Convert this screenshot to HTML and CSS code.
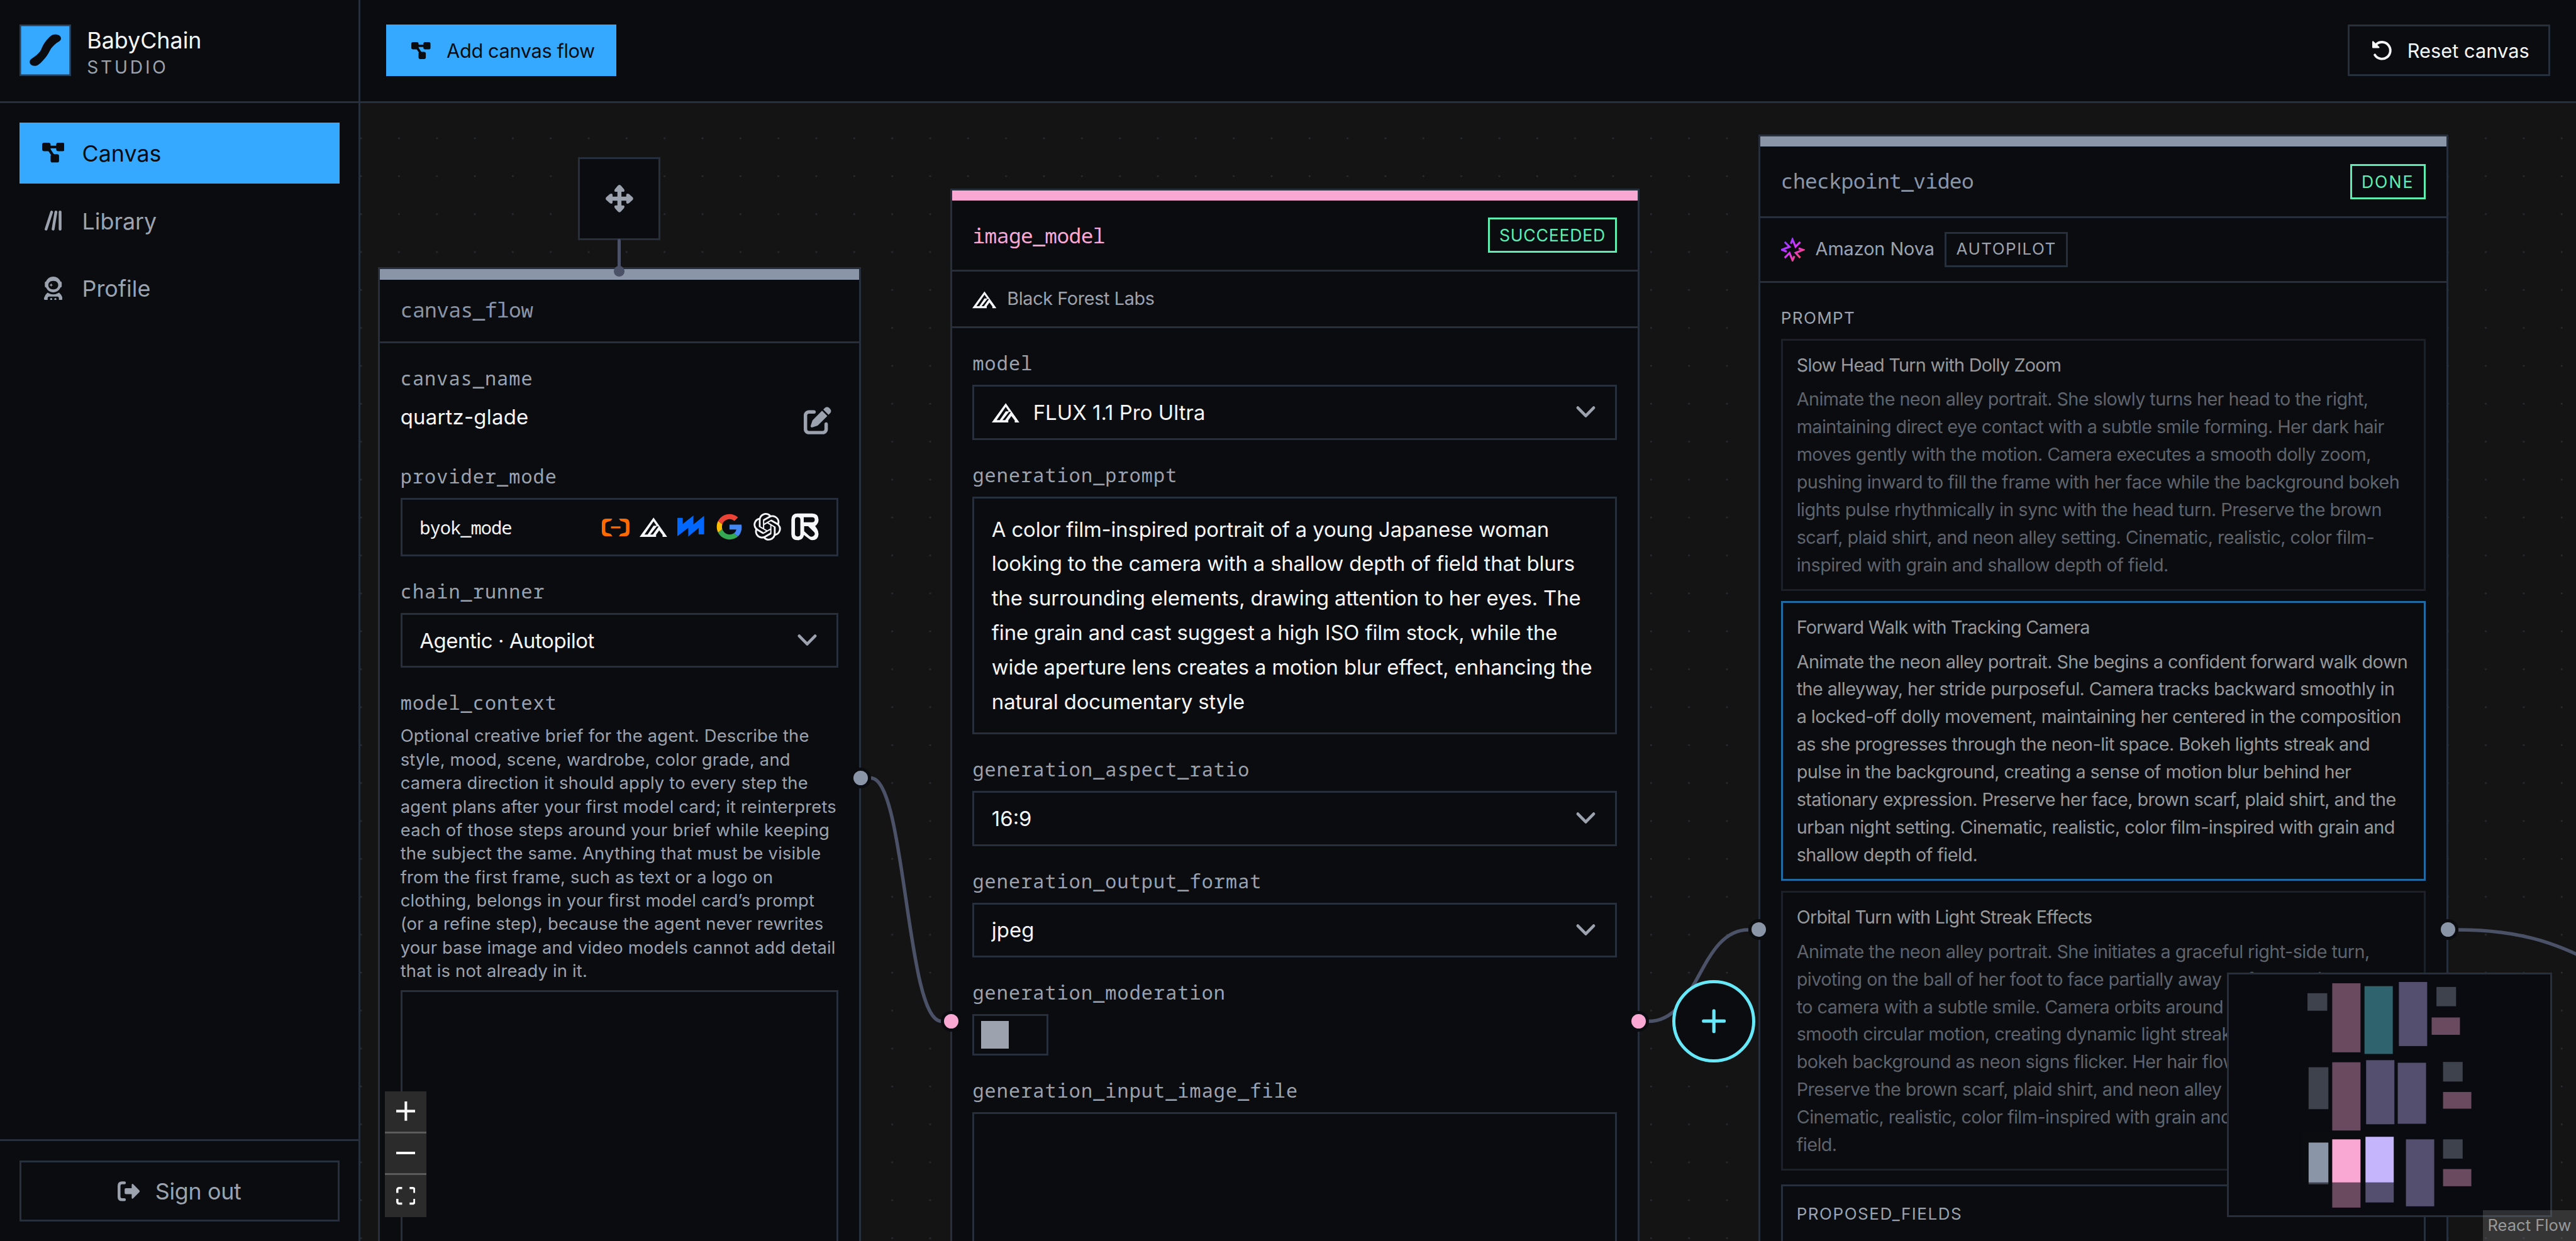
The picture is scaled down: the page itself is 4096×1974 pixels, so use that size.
FILE: index.html
```html
<!DOCTYPE html>
<html lang="en">
<head>
<meta charset="utf-8">
<title>BabyChain Studio</title>
<link rel="stylesheet" href="styles.css">
</head>
<body>
<svg class="defs" aria-hidden="true">
  <defs>
    <linearGradient id="nova" gradientUnits="userSpaceOnUse" x1="4" y1="4" x2="52" y2="52">
      <stop offset="0" stop-color="#7a3cff"/><stop offset=".5" stop-color="#d935ff"/><stop offset="1" stop-color="#ff4d4d"/>
    </linearGradient>
    <symbol id="i-flow" viewBox="0 0 56 49.5">
      <rect x="0" y="0" width="21" height="21" rx="5"/><rect x="35" y="0" width="21" height="21" rx="5"/><rect x="21" y="28.3" width="21" height="21" rx="5"/>
      <path d="M12 10.7H44M14 12L30 36" fill="none" stroke="currentColor" stroke-width="7"/>
    </symbol>
    <symbol id="i-bfl" viewBox="0 0 68 68">
      <path fill-rule="evenodd" d="M34.4 11.3L68 59H56.6V54L48.3 43L40.7 53.5V59H0ZM34.4 20.7L12 53H19.6L34.4 31.5H41.8ZM42.4 33L26.3 53H32.8L47 33.2Z"/>
    </symbol>
    <symbol id="i-chevron" viewBox="0 0 12 12">
      <path d="M1.4 3.5L6 8.2L10.6 3.5" fill="none" stroke="currentColor" stroke-width="1.7" stroke-linecap="round" stroke-linejoin="round"/>
    </symbol>
  </defs>
</svg>
<div class="app">
  <aside class="sidebar">
    <div class="brand">
      <svg class="brand-logo" viewBox="0 0 128 128"><rect x="2" y="2" width="124" height="124" fill="#34a9ff" stroke="#27405c" stroke-width="4"/><path fill="#0a0c10" d="M87.7 24.7C96 24.5 104 28 103 36C102 42 95 43 91 47C84 53 79 58 76 64C72 72 67 80 59 88.5C52 96 46 103 37 102.8C29 102.5 25 98 25.5 92C26 86 31 85 37 80C45 74 51 68 54 62C58 52 62 45 70 36C76 29 81 25 87.7 24.7Z"/></svg>
      <div class="brand-text">
        <div class="brand-name">BabyChain</div>
        <div class="brand-sub">STUDIO</div>
      </div>
    </div>
    <nav class="nav">
      <a class="nav-item nav-item--active"><span class="nav-icon"><svg class="icon-flow"><use href="#i-flow"/></svg></span>Canvas</a>
      <a class="nav-item"><span class="nav-icon"><svg class="icon-library" viewBox="0 0 42 49.5"><path d="M17.3 3.6L3.6 45.9M28 3.6L21 45.9M38.4 3.6V45.9" fill="none" stroke="currentColor" stroke-width="7" stroke-linecap="round"/></svg></span>Library</a>
      <a class="nav-item"><span class="nav-icon"><svg class="icon-astro" viewBox="0 0 46 58"><path fill-rule="evenodd" d="M23 0C31 0 38 4.700 41 12Q44 12 44 15V24Q44 27 41 27C38 34 31 39 23 39S8 34 5 27Q2 27 2 24V15Q2 12 5 12C8 4.700 15 0 23 0ZM23 10.500C15 10.500 10.700 15 10.700 21S15 31.800 23 31.800S35.300 27 35.300 21S31 10.500 23 10.500Z"/><path d="M17.700 16.500L19 19.700L22.200 21L19 22.300L17.700 25.500L16.400 22.300L13.200 21L16.400 19.700Z"/><path d="M8.500 40Q23 48.500 37.500 40Q43.500 45 46 53V55Q46 58 43 58H37V54Q37 49.500 33 49.500H13Q9 49.500 9 54V58H3Q0 58 0 55V53Q2.500 45 8.500 40ZM15.300 58V55.500Q15.300 53 17.800 53T20.300 55.500V58ZM25.700 58V55.500Q25.700 53 28.200 53T30.700 55.500V58Z"/></svg></span>Profile</a>
    </nav>
    <div class="sidebar-foot">
      <button class="signout"><svg class="icon-out" viewBox="0 0 56 49.500"><path d="M17 3.700H11Q3.600 3.700 3.600 11V38.500Q3.600 45.800 11 45.800H17" fill="none" stroke="currentColor" stroke-width="7" stroke-linecap="round"/><path d="M20.500 17H35V8.500Q35.500 4.500 38.500 7L54 22.500Q56 24.700 54 27L38.500 42.500Q35.500 45 35 41V32H20.500Q17.500 32 17.500 29V20Q17.500 17 20.500 17Z"/></svg>Sign out</button>
    </div>
  </aside>
  <main class="main">
    <header class="topbar">
      <button class="btn btn--primary"><svg class="icon-flow-sm"><use href="#i-flow"/></svg>Add canvas flow</button>
      <button class="btn btn--ghost"><svg class="icon-reset" viewBox="0 0 48 48"><path d="M6.400 34.800A20.800 20.800 0 1 0 9.500 9.200" fill="none" stroke="currentColor" stroke-width="6" stroke-linecap="round"/><path d="M0 2Q.5-.8 2.800.8L17.500 15Q19 18 16 18H2Q0 18 0 16Z"/></svg>Reset canvas</button>
    </header>
    <section class="pane">
      <svg class="dots"><defs><pattern id="dots" x="9.700" y="8.300" width="60.330" height="60.330" patternUnits="userSpaceOnUse"><circle cx="51.700" cy="47.600" r="1.400" fill="#2c2d35"/></pattern></defs><rect width="100%" height="100%" fill="url(#dots)"/></svg>

      <div class="flow">
        <svg class="edges" viewBox="0 0 1300 700">
          <path d="M296 391.500C316.400 391.500 316.400 532.700 337 532.700"/>
          <path d="M747 532.700C776.300 532.700 776.300 479.600 805 479.600"/>
          <path d="M1216.600 479.600C1297 479.600 1297 519.300 1378 519.300"/>
        </svg>

        <div class="node mover">
          <svg class="icon-move" viewBox="-34.250 -34.250 68.500 68.500"><path id="mh" d="M0-34.200Q2.500-34.200 4.500-31.500L11.500-23.500Q14.500-17 9-17H5V0H-5V-17H-9Q-14.500-17-11.500-23.500L-4.500-31.500Q-2.500-34.200 0-34.200Z"/><use href="#mh" transform="rotate(90)"/><use href="#mh" transform="rotate(180)"/><use href="#mh" transform="rotate(270)"/></svg>
        </div>

        <article class="node card card--flow">
          <div class="accent accent--slate"></div>
          <header class="card-head card-head--plain"><h2 class="card-title">canvas_flow</h2></header>
          <div class="card-body">
            <div class="field"><div class="label">canvas_name</div>
              <div class="name-row"><span class="name">quartz-glade</span><span class="edit"><svg viewBox="0 0 512 512"><path d="M471.600 21.700c-21.900-21.900-57.300-21.900-79.200 0L362.300 51.700l97.900 97.900 30.100-30.100c21.900-21.900 21.900-57.300 0-79.200L471.600 21.700zm-299.200 220c-6.100 6.100-10.800 13.600-13.500 21.900l-29.600 88.800c-2.900 8.600-.6 18.100 5.800 24.600s15.900 8.700 24.600 5.800l88.800-29.600c8.200-2.700 15.700-7.400 21.900-13.500L437.700 172.300 339.700 74.300 172.400 241.700zM96 64C43 64 0 107 0 160V416c0 53 43 96 96 96H352c53 0 96-43 96-96V320c0-17.700-14.300-32-32-32s-32 14.300-32 32v96c0 17.700-14.300 32-32 32H96c-17.700 0-32-14.300-32-32V160c0-17.700 14.300-32 32-32h96c17.700 0 32-14.300 32-32s-14.300-32-32-32H96z"/></svg></span></div>
            </div>
            <div class="field"><div class="label">provider_mode</div>
              <div class="box provider"><span class="mode">byok_mode</span>
                <span class="providers">
                  <svg class="logo-ali" viewBox="0 0 68 68"><path id="ali" d="M26 14H11Q0 14 0 25V46.500Q0 57.500 11 57.500H26L22 51.500L12 49Q8.500 48 8.500 44V27.500Q8.500 23.500 12 22.500L22 19.500Z"/><use href="#ali" transform="matrix(-1 0 0 1 68 0)"/><path d="M22.500 33H46V38H22.500Z"/></svg>
                  <svg><use href="#i-bfl"/></svg>
                  <svg class="logo-wave" viewBox="0 0 68 68"><path d="M0 12H13.300V27L39.600 6.300V28.300L66 7V52.700H52.500V37L27 58V36.300L0 57.500Z"/></svg>
                  <svg viewBox="-2 -2 52 52"><path fill="#ea4335" d="M24 9.500c3.540 0 6.710 1.220 9.210 3.600l6.850-6.850C35.900 2.380 30.470 0 24 0 14.620 0 6.510 5.380 2.560 13.220l7.980 6.190C12.430 13.720 17.740 9.500 24 9.500z"/><path fill="#4285f4" d="M46.980 24.550c0-1.570-.15-3.090-.38-4.550H24v9.020h12.940c-.58 2.960-2.260 5.480-4.780 7.180l7.730 6c4.510-4.180 7.090-10.360 7.090-17.650z"/><path fill="#fbbc05" d="M10.530 28.590c-.48-1.450-.76-2.990-.76-4.590s.27-3.140.76-4.590l-7.980-6.190C.92 16.460 0 20.120 0 24c0 3.880.92 7.540 2.560 10.780l7.970-6.190z"/><path fill="#34a853" d="M24 48c6.480 0 11.930-2.130 15.890-5.810l-7.730-6c-2.150 1.450-4.920 2.300-8.160 2.300-6.260 0-11.570-4.220-13.470-9.910l-7.980 6.190C6.510 42.620 14.620 48 24 48z"/></svg>
                  <svg viewBox="0 0 24 24"><path d="M22.2819 9.8211a5.9847 5.9847 0 0 0-.5157-4.9108 6.0462 6.0462 0 0 0-6.5098-2.9A6.0651 6.0651 0 0 0 4.9807 4.1818a5.9847 5.9847 0 0 0-3.9977 2.9 6.0462 6.0462 0 0 0 .7427 7.0966 5.98 5.98 0 0 0 .511 4.9107 6.051 6.051 0 0 0 6.5146 2.9001A5.9847 5.9847 0 0 0 13.2599 24a6.0557 6.0557 0 0 0 5.7718-4.2058 5.9894 5.9894 0 0 0 3.9977-2.9001 6.0557 6.0557 0 0 0-.7475-7.0729zm-9.022 12.6081a4.4755 4.4755 0 0 1-2.8764-1.0408l.1419-.0804 4.7783-2.7582a.7948.7948 0 0 0 .3927-.6813v-6.7369l2.02 1.1686a.071.071 0 0 1 .038.052v5.5826a4.504 4.504 0 0 1-4.4945 4.4944zm-9.6607-4.1254a4.4708 4.4708 0 0 1-.5346-3.0137l.142.0852 4.783 2.7582a.7712.7712 0 0 0 .7806 0l5.8428-3.3685v2.3324a.0804.0804 0 0 1-.0332.0615L9.74 19.9502a4.4992 4.4992 0 0 1-6.1408-1.6464zM2.3408 7.8956a4.485 4.485 0 0 1 2.3655-1.9728V11.6a.7664.7664 0 0 0 .3879.6765l5.8144 3.3543-2.0201 1.1685a.0757.0757 0 0 1-.071 0l-4.8303-2.7865A4.504 4.504 0 0 1 2.3408 7.872zm16.5963 3.8558L13.1038 8.364 15.1192 7.2a.0757.0757 0 0 1 .071 0l4.8303 2.7913a4.4944 4.4944 0 0 1-.6765 8.1042v-5.6772a.79.79 0 0 0-.407-.667zm2.0107-3.0231l-.142-.0852-4.7735-2.7818a.7759.7759 0 0 0-.7854 0L9.409 9.2297V6.8974a.0662.0662 0 0 1 .0284-.0615l4.8303-2.7866a4.4992 4.4992 0 0 1 6.6802 4.66zM8.3065 12.863l-2.02-1.1638a.0804.0804 0 0 1-.038-.0567V6.0742a4.4992 4.4992 0 0 1 7.3757-3.4537l-.142.0805L8.704 5.459a.7948.7948 0 0 0-.3927.6813zm1.0976-2.3654l2.602-1.4998 2.6069 1.4998v2.9994l-2.5974 1.4997-2.6067-1.4997Z"/></svg>
                  <svg viewBox="0 0 68 69"><path fill-rule="evenodd" d="M15.500 1H52Q68 1 68 17Q68 27 59.500 32.500L64.500 40Q68 46 68 53Q67 68 52 68Q48 68 44.500 65L31.500 55Q29 68 15.500 68Q0 68 0 53V16.500Q0 1 15.500 1ZM15.700 10.300Q9 10.300 9 17V52.500Q9 59 15.700 59T22.500 52.500V17Q22.500 10.300 15.700 10.300ZM31 10.700V23.300H52Q58.500 23 58.500 17T52 10.700ZM32 33V45.700L45 57.500Q50 61.500 55.500 57.500Q61 53 57 48L42 33Z"/></svg>
                </span>
              </div>
            </div>
            <div class="field"><div class="label">chain_runner</div>
              <div class="box select"><span class="t-agentic">Agentic · Autopilot</span><svg class="chev"><use href="#i-chevron"/></svg></div>
            </div>
            <div class="field"><div class="label">model_context</div>
              <p class="hint">Optional creative brief for the agent. Describe the<br>style, mood, scene, wardrobe, color grade, and<br>camera direction it should apply to every step the<br>agent plans after your first model card; it reinterprets<br>each of those steps around your brief while keeping<br>the subject the same. Anything that must be visible<br>from the first frame, such as text or a logo on<br>clothing, belongs in your first model card’s prompt<br>(or a refine step), because the agent never rewrites<br>your base image and video models cannot add detail<br>that is not already in it.</p>
              <div class="box area"></div>
            </div>
          </div>
        </article>
        <div class="node stub"></div>
        <div class="node stub-dot"></div>

        <article class="node card card--image">
          <div class="accent accent--pink"></div>
          <header class="card-head"><h2 class="card-title card-title--pink">image_model</h2><span class="badge badge--green">SUCCEEDED</span></header>
          <div class="vendor"><svg class="vendor-icon"><use href="#i-bfl"/></svg><span class="vendor-name">Black Forest Labs</span></div>
          <div class="card-body">
            <div class="field"><div class="label">model</div>
              <div class="box select"><svg class="model-icon"><use href="#i-bfl"/></svg><span class="t-flux">FLUX 1.1 Pro Ultra</span><svg class="chev"><use href="#i-chevron"/></svg></div></div>
            <div class="field"><div class="label">generation_prompt</div>
              <div class="box prompt">A color film-inspired portrait of a young Japanese woman<br>looking to the camera with a shallow depth of field that blurs<br>the surrounding elements, drawing attention to her eyes. The<br>fine grain and cast suggest a high ISO film stock, while the<br>wide aperture lens creates a motion blur effect, enhancing the<br>natural documentary style</div></div>
            <div class="field"><div class="label">generation_aspect_ratio</div>
              <div class="box select"><span>16:9</span><svg class="chev"><use href="#i-chevron"/></svg></div></div>
            <div class="field"><div class="label">generation_output_format</div>
              <div class="box select"><span>jpeg</span><svg class="chev"><use href="#i-chevron"/></svg></div></div>
            <div class="field"><div class="label">generation_moderation</div>
              <div class="toggle"><span class="knob"></span></div></div>
            <div class="field"><div class="label">generation_input_image_file</div>
              <div class="box area"></div></div>
          </div>
        </article>

        <article class="node card card--video">
          <div class="accent accent--slate"></div>
          <header class="card-head"><h2 class="card-title">checkpoint_video</h2><span class="badge badge--green badge--done">DONE</span></header>
          <div class="vendor"><svg class="vendor-icon" viewBox="0 0 60 57"><path d="M9 9.300L21 21.300L2 28.700L14 33.300M24.300 13.700L28.300 3L36 21L47.700 9.300M43.700 25L55 29L36.300 36.300L47.700 48.700M33 44.300L28.500 55L21 36.700L9 48.700" fill="none" stroke="url(#nova)" stroke-width="5"/></svg><span class="vendor-name vendor-name--nova">Amazon Nova</span><span class="badge badge--auto">AUTOPILOT</span></div>
          <div class="card-body">
            <div class="caps">PROMPT</div>
            <div class="options">
              <div class="option"><h3>Slow Head Turn with Dolly Zoom</h3><p>Animate the neon alley portrait. She slowly turns her head to the right,<br>maintaining direct eye contact with a subtle smile forming. Her dark hair<br>moves gently with the motion. Camera executes a smooth dolly zoom,<br>pushing inward to fill the frame with her face while the background bokeh<br>lights pulse rhythmically in sync with the head turn. Preserve the brown<br>scarf, plaid shirt, and neon alley setting. Cinematic, realistic, color film-<br>inspired with grain and shallow depth of field.</p></div>
              <div class="option option--picked"><h3>Forward Walk with Tracking Camera</h3><p>Animate the neon alley portrait. She begins a confident forward walk down<br>the alleyway, her stride purposeful. Camera tracks backward smoothly in<br>a locked-off dolly movement, maintaining her centered in the composition<br>as she progresses through the neon-lit space. Bokeh lights streak and<br>pulse in the background, creating a sense of motion blur behind her<br>stationary expression. Preserve her face, brown scarf, plaid shirt, and the<br>urban night setting. Cinematic, realistic, color film-inspired with grain and<br>shallow depth of field.</p></div>
              <div class="option"><h3>Orbital Turn with Light Streak Effects</h3><p>Animate the neon alley portrait. She initiates a graceful right-side turn,<br>pivoting on the ball of her foot to face partially away before turning back<br>to camera with a subtle smile. Camera orbits around her in a<br>smooth circular motion, creating dynamic light streaks in the<br>bokeh background as neon signs flicker. Her hair flows softly.<br>Preserve the brown scarf, plaid shirt, and neon alley setting.<br>Cinematic, realistic, color film-inspired with grain and depth of<br>field.</p></div>
            </div>
            <div class="proposed"><div class="caps caps--fields">PROPOSED_FIELDS</div></div>
          </div>
        </article>

        <span class="handle handle--a"></span>
        <span class="handle handle--pink handle--b1"></span>
        <span class="handle handle--pink handle--b2"></span>
        <span class="handle handle--c1"></span>
        <span class="handle handle--c2"></span>
        <button class="node add-node"><svg viewBox="0 0 14 14"><path d="M7 1V13M1 7H13" fill="none" stroke="currentColor" stroke-width="1.900" stroke-linecap="round"/></svg></button>
      </div>

      <div class="controls">
        <button><svg viewBox="0 0 32 32"><path d="M32 18.133H18.133V32h-4.266V18.133H0v-4.266h13.867V0h4.266v13.867H32z"/></svg></button>
        <button><svg viewBox="0 0 32 5"><path d="M0 0h32v4.200H0z"/></svg></button>
        <button><svg viewBox="0 0 32 30"><path d="M3.692 4.630c0-.53.4-.938.939-.938h5.215V0H4.708C2.130 0 0 2.054 0 4.630v5.216h3.692V4.631zM27.354 0h-5.200v3.692h5.170c.53 0 .984.4.984.939v5.215H32V4.631A4.624 4.624 0 0027.354 0zm.954 24.830c0 .532-.4.940-.939.940h-5.215v3.768h5.215c2.577 0 4.631-2.130 4.631-4.707v-5.139h-3.692v5.139zm-23.677.940c-.531 0-.939-.4-.939-.940v-5.138H0v5.139c0 2.577 2.130 4.707 4.708 4.707h5.138V25.770H4.631z"/></svg></button>
      </div>

      <div class="minimap"><svg viewBox="0 0 200 150">
        <g fill="#8a95a8"><rect x="48.900" y="11.700" width="12.300" height="10.900"/><rect x="129.200" y="7.800" width="12.200" height="12"/><rect x="49.600" y="57.800" width="12.300" height="26.100"/><rect x="133.300" y="54.500" width="12.200" height="12.200"/><rect x="49.600" y="104.700" width="12.300" height="26"/><rect x="133.300" y="102.700" width="12.200" height="12"/></g>
        <g fill="#f9a8d4"><rect x="64.300" y="5.500" width="17.600" height="43"/><rect x="126.200" y="26.800" width="17.600" height="10.800"/><rect x="64.300" y="54.700" width="17.600" height="42.500"/><rect x="133.300" y="73.200" width="17.600" height="10.400"/><rect x="64.300" y="102.700" width="17.600" height="42.500"/><rect x="133.300" y="121.200" width="17.600" height="10.700"/></g>
        <rect fill="#67e8f9" x="84.400" y="7.300" width="17.600" height="42.200"/>
        <g fill="#c4b5fd"><rect x="105.800" y="4.700" width="17.600" height="39.900"/><rect x="85.400" y="53.400" width="17.600" height="39.900"/><rect x="105.100" y="55" width="17.600" height="38"/><rect x="85" y="101.100" width="17.600" height="40.900"/><rect x="110.200" y="102.700" width="17.600" height="41.700"/></g>
        <path fill="#0a0c10" fill-opacity=".6" fill-rule="evenodd" d="M0 0H200V150H0ZM46 98V129.500H106V98Z"/>
      </svg></div>
      <div class="attribution">React Flow</div>
    </section>
  </main>
</div>
</body>
</html>
```
FILE: styles.css
```css
/* 1rem is one layout unit; the window is 1600 units wide. */
html { font-size: 2.56px; }
* { box-sizing: border-box; }
body {
  margin: 0;
  background: #0a0c10;
  color: #f5f6f8;
  font-family: Inter, "Liberation Sans", sans-serif;
  font-size: 12rem;
  overflow: hidden;
}
h2, h3, p { margin: 0; font-weight: 400; }
button { font: inherit; color: inherit; background: none; border: 0; padding: 0; margin: 0; }
svg { display: block; fill: currentColor; flex: none; }
.defs { position: absolute; width: 0; height: 0; }

.app { display: flex; width: 100vw; height: 100vh; }

/* Sidebar */
.sidebar { width: 224rem; flex: none; border-right: 3px solid #272f3d; display: flex; flex-direction: column; }
.brand { height: 64rem; flex: none; border-bottom: 3px solid #272f3d; display: flex; align-items: center; gap: 10rem; padding-left: 12rem; }
.brand-logo { width: 32rem; height: 32rem; }
.brand-text { padding-top: 3.8rem; }
.brand-name { font-size: 14rem; line-height: 17rem; }
.brand-sub { font-size: 11rem; line-height: 16rem; letter-spacing: .135em; color: #9ca3af; }
.nav { flex: 1; padding: 12rem; display: flex; flex-direction: column; gap: 4rem; }
.nav-item { height: 38rem; display: flex; align-items: center; gap: 10rem; padding: 1rem 0 0 13rem; font-size: 14rem; color: #9ca3af; }
.nav-item--active { background: #34a9ff; color: #0a0c10; }
.nav-icon { width: 16rem; margin-top: -1rem; display: flex; justify-content: center; }
.icon-flow { width: 14rem; height: 12.4rem; }
.icon-library { width: 10.5rem; height: 12.4rem; }
.icon-astro { width: 11.5rem; height: 14.5rem; }
.sidebar-foot { border-top: 3px solid #272f3d; padding: 12rem; }
.signout { width: 100%; height: 38rem; border: 3px solid #272f3d; display: flex; align-items: center; justify-content: center; gap: 9.4rem; font-size: 14rem; letter-spacing: -.009em; color: #9ca3af; }
.icon-out { width: 14rem; height: 12.4rem; }

/* Top bar */
.main { flex: 1; min-width: 0; display: flex; flex-direction: column; }
.topbar { height: 64rem; flex: none; border-bottom: 3px solid #272f3d; display: flex; align-items: center; justify-content: space-between; padding: 0 16rem; }
.btn { height: 32rem; display: flex; align-items: center; font-size: 12rem; }
.btn--primary { background: #34a9ff; color: #0a0c10; padding: 0 13.5rem 0 15.6rem; gap: 9.8rem; letter-spacing: -.012em; }
.btn--ghost { border: 3px solid #272f3d; padding: 0 11.8rem 0 14.2rem; gap: 9.8rem; letter-spacing: .002em; }
.icon-flow-sm { width: 12rem; height: 10.6rem; }
.icon-reset { width: 12rem; height: 12rem; overflow: visible; }

/* Canvas */
.pane { position: relative; flex: 1; overflow: hidden; background: #141414; }
.dots { position: absolute; inset: 0; width: 100%; height: 100%; }
.flow { position: absolute; left: 0; top: 0; zoom: 1.071; }
.edges { position: absolute; left: 0; top: 0; width: 1300rem; height: 700rem; overflow: visible; fill: none; stroke: #4b5268; stroke-width: 2; }
.node { position: absolute; }
.card { background: #0a0c10; border: 3px solid #272f3d; }
.card--flow { left: 10rem; top: 95.3rem; width: 280rem; }
.card--image { left: 341.8rem; top: 49.5rem; width: 400rem; }
.card--video { left: 810.6rem; top: 18.3rem; width: 400rem; }
.mover { left: 126rem; top: 31.4rem; width: 48rem; height: 48rem; background: #0a0c10; border: 3px solid #272f3d; display: flex; align-items: center; justify-content: center; color: #9ca3af; }
.icon-move { width: 16rem; height: 16rem; }
.stub { left: 149rem; top: 78.8rem; width: 2rem; height: 18rem; background: #4b5268; border-radius: 1rem; }
.stub-dot { left: 147rem; top: 94.6rem; width: 6rem; height: 6rem; border-radius: 50%; background: #4b5268; }

.accent { height: 6rem; }
.accent--slate { background: #8a95a8; }
.accent--pink { background: #f9a8d4; }
.card-head { height: 41.4rem; border-bottom: 3px solid #272f3d; padding: 0 12rem; display: flex; align-items: center; justify-content: space-between; }
.card-head--plain { height: 37rem; }
.card-title { font-family: "Noto Sans Mono", "Roboto Mono", "JetBrains Mono", monospace; font-size: 12rem; letter-spacing: -.018em; padding-bottom: 1rem; color: #8a95a8; }
.card-title--pink { color: #f9a8d4; padding-bottom: 0; }
.badge { border: 3px solid #272f3d; height: 20.4rem; padding: 0 5.6rem; display: flex; align-items: center; font-size: 9.7rem; letter-spacing: .03em; }
.badge--green { border-color: #5eeeb4; color: #5eeeb4; }
.badge--done { letter-spacing: .075em; }
.badge--auto { font-size: 9.5rem; letter-spacing: .055em; color: #9ca3af; }
.vendor { border-bottom: 3px solid #272f3d; padding: 8rem 12rem; display: flex; align-items: center; gap: 6rem; font-size: 10.5rem; line-height: 15.6rem; }
.vendor-icon { width: 14rem; height: 14rem; }
.vendor-name { letter-spacing: -.0125em; color: #9ca3af; }
.vendor-name--nova { letter-spacing: -.001em; }

.card-body { padding: 12rem; display: flex; flex-direction: column; gap: 12rem; }
.field { display: flex; flex-direction: column; gap: 4rem; }
.label { font-family: "Noto Sans Mono", "Roboto Mono", "JetBrains Mono", monospace; font-size: 11rem; line-height: 16.8rem; letter-spacing: .036em; color: #9ca3af; }
.name-row { display: flex; justify-content: space-between; height: 24rem; line-height: 20rem; }
.name { font-size: 12rem; letter-spacing: .007em; }
.edit { width: 24rem; height: 24rem; display: flex; align-items: center; justify-content: center; color: #9ca3af; }
.edit svg { width: 16rem; height: 16rem; }
.box { border: 3px solid #272f3d; }
.provider { height: 34rem; padding: 0 10rem; display: flex; align-items: center; justify-content: space-between; }
.mode { font-family: "Noto Sans Mono", "Roboto Mono", "JetBrains Mono", monospace; font-size: 10.5rem; letter-spacing: -.035em; }
.providers { display: flex; gap: 6rem; }
.providers svg { width: 16rem; height: 16rem; }
.providers .logo-ali { fill: #ff6a00; }
.providers .logo-wave { fill: #0068ff; }
.select { height: 32rem; padding: 0 11rem 0 10rem; display: flex; align-items: center; gap: 8rem; font-size: 12rem; }
.model-icon { width: 16rem; height: 16rem; }
.t-agentic { letter-spacing: -.013em; }
.t-flux { letter-spacing: .001em; }
.chev { width: 12rem; height: 12rem; margin-left: auto; color: #9ca3af; }
.hint { font-size: 10rem; line-height: 13.64rem; letter-spacing: .006em; color: #9ca3af; white-space: nowrap; }
.area { height: 260rem; }
.prompt { padding: 8rem 10rem; height: 138rem; font-size: 12rem; line-height: 20rem; letter-spacing: -.005em; white-space: nowrap; }
.toggle { width: 44rem; height: 24rem; border: 3px solid #272f3d; padding: 0 4rem; display: flex; align-items: center; }
.knob { width: 16rem; height: 16rem; background: #9ca3af; }

.card--video .card-body { gap: 8rem; }
.caps { font-size: 9.5rem; line-height: 16.6rem; letter-spacing: .052em; color: #9ca3af; margin-bottom: -4rem; }
.caps--fields { line-height: 16rem; letter-spacing: .058em; margin: 0; }
.options { display: flex; flex-direction: column; gap: 6rem; }
.option { border: 3px solid #1b2029; padding: 6rem 8rem; display: flex; flex-direction: column; gap: 4rem; font-size: 10.5rem; line-height: 16rem; white-space: nowrap; color: #5f636b; letter-spacing: -.0196em; }
.option h3 { font-size: 10.5rem; letter-spacing: -.026em; color: #97989a; }
.option--picked { border-color: #216ba3; color: #97989a; }
.proposed { border: 3px solid #272f3d; height: 120rem; padding: 8rem; }

.handle { position: absolute; width: 12rem; height: 12rem; margin: -6rem 0 0 -6rem; border: 2rem solid #0a0c10; border-radius: 50%; background: #8a95a8; }
.handle--pink { background: #f9a8d4; }
.handle--a { left: 290rem; top: 391.5rem; }
.handle--b1 { left: 342.6rem; top: 532.7rem; }
.handle--b2 { left: 741rem; top: 532.7rem; }
.handle--c1 { left: 810.7rem; top: 479.6rem; }
.handle--c2 { left: 1210.6rem; top: 479.6rem; }
.add-node { left: 760.8rem; top: 508.7rem; width: 48rem; height: 48rem; border: 2rem solid #67e8f9; border-radius: 50%; background: #0a0c10; color: #67e8f9; display: flex; align-items: center; justify-content: center; }
.add-node svg { width: 14rem; height: 14rem; }

/* Canvas overlays */
.controls { position: absolute; left: 15rem; bottom: 15rem; width: 26rem; }
.controls button { width: 26rem; height: 26rem; background: #2b2b2b; border-bottom: 3px solid #5b5b5b; display: flex; align-items: center; justify-content: center; color: #f8f8f8; }
.controls button:last-child { border-bottom: 0; }
.controls svg { width: 12rem; max-height: 12rem; }
.minimap { position: absolute; right: 15rem; bottom: 15rem; width: 202rem; height: 152rem; background: #0a0c10; border: 3px solid #272f3d; }
.minimap svg { width: 100%; height: 100%; }
.attribution { position: absolute; right: 0; bottom: 0; padding: 2rem 3rem; font-size: 10rem; line-height: 15rem; color: #999; background: rgba(150, 150, 150, .25); }
```
